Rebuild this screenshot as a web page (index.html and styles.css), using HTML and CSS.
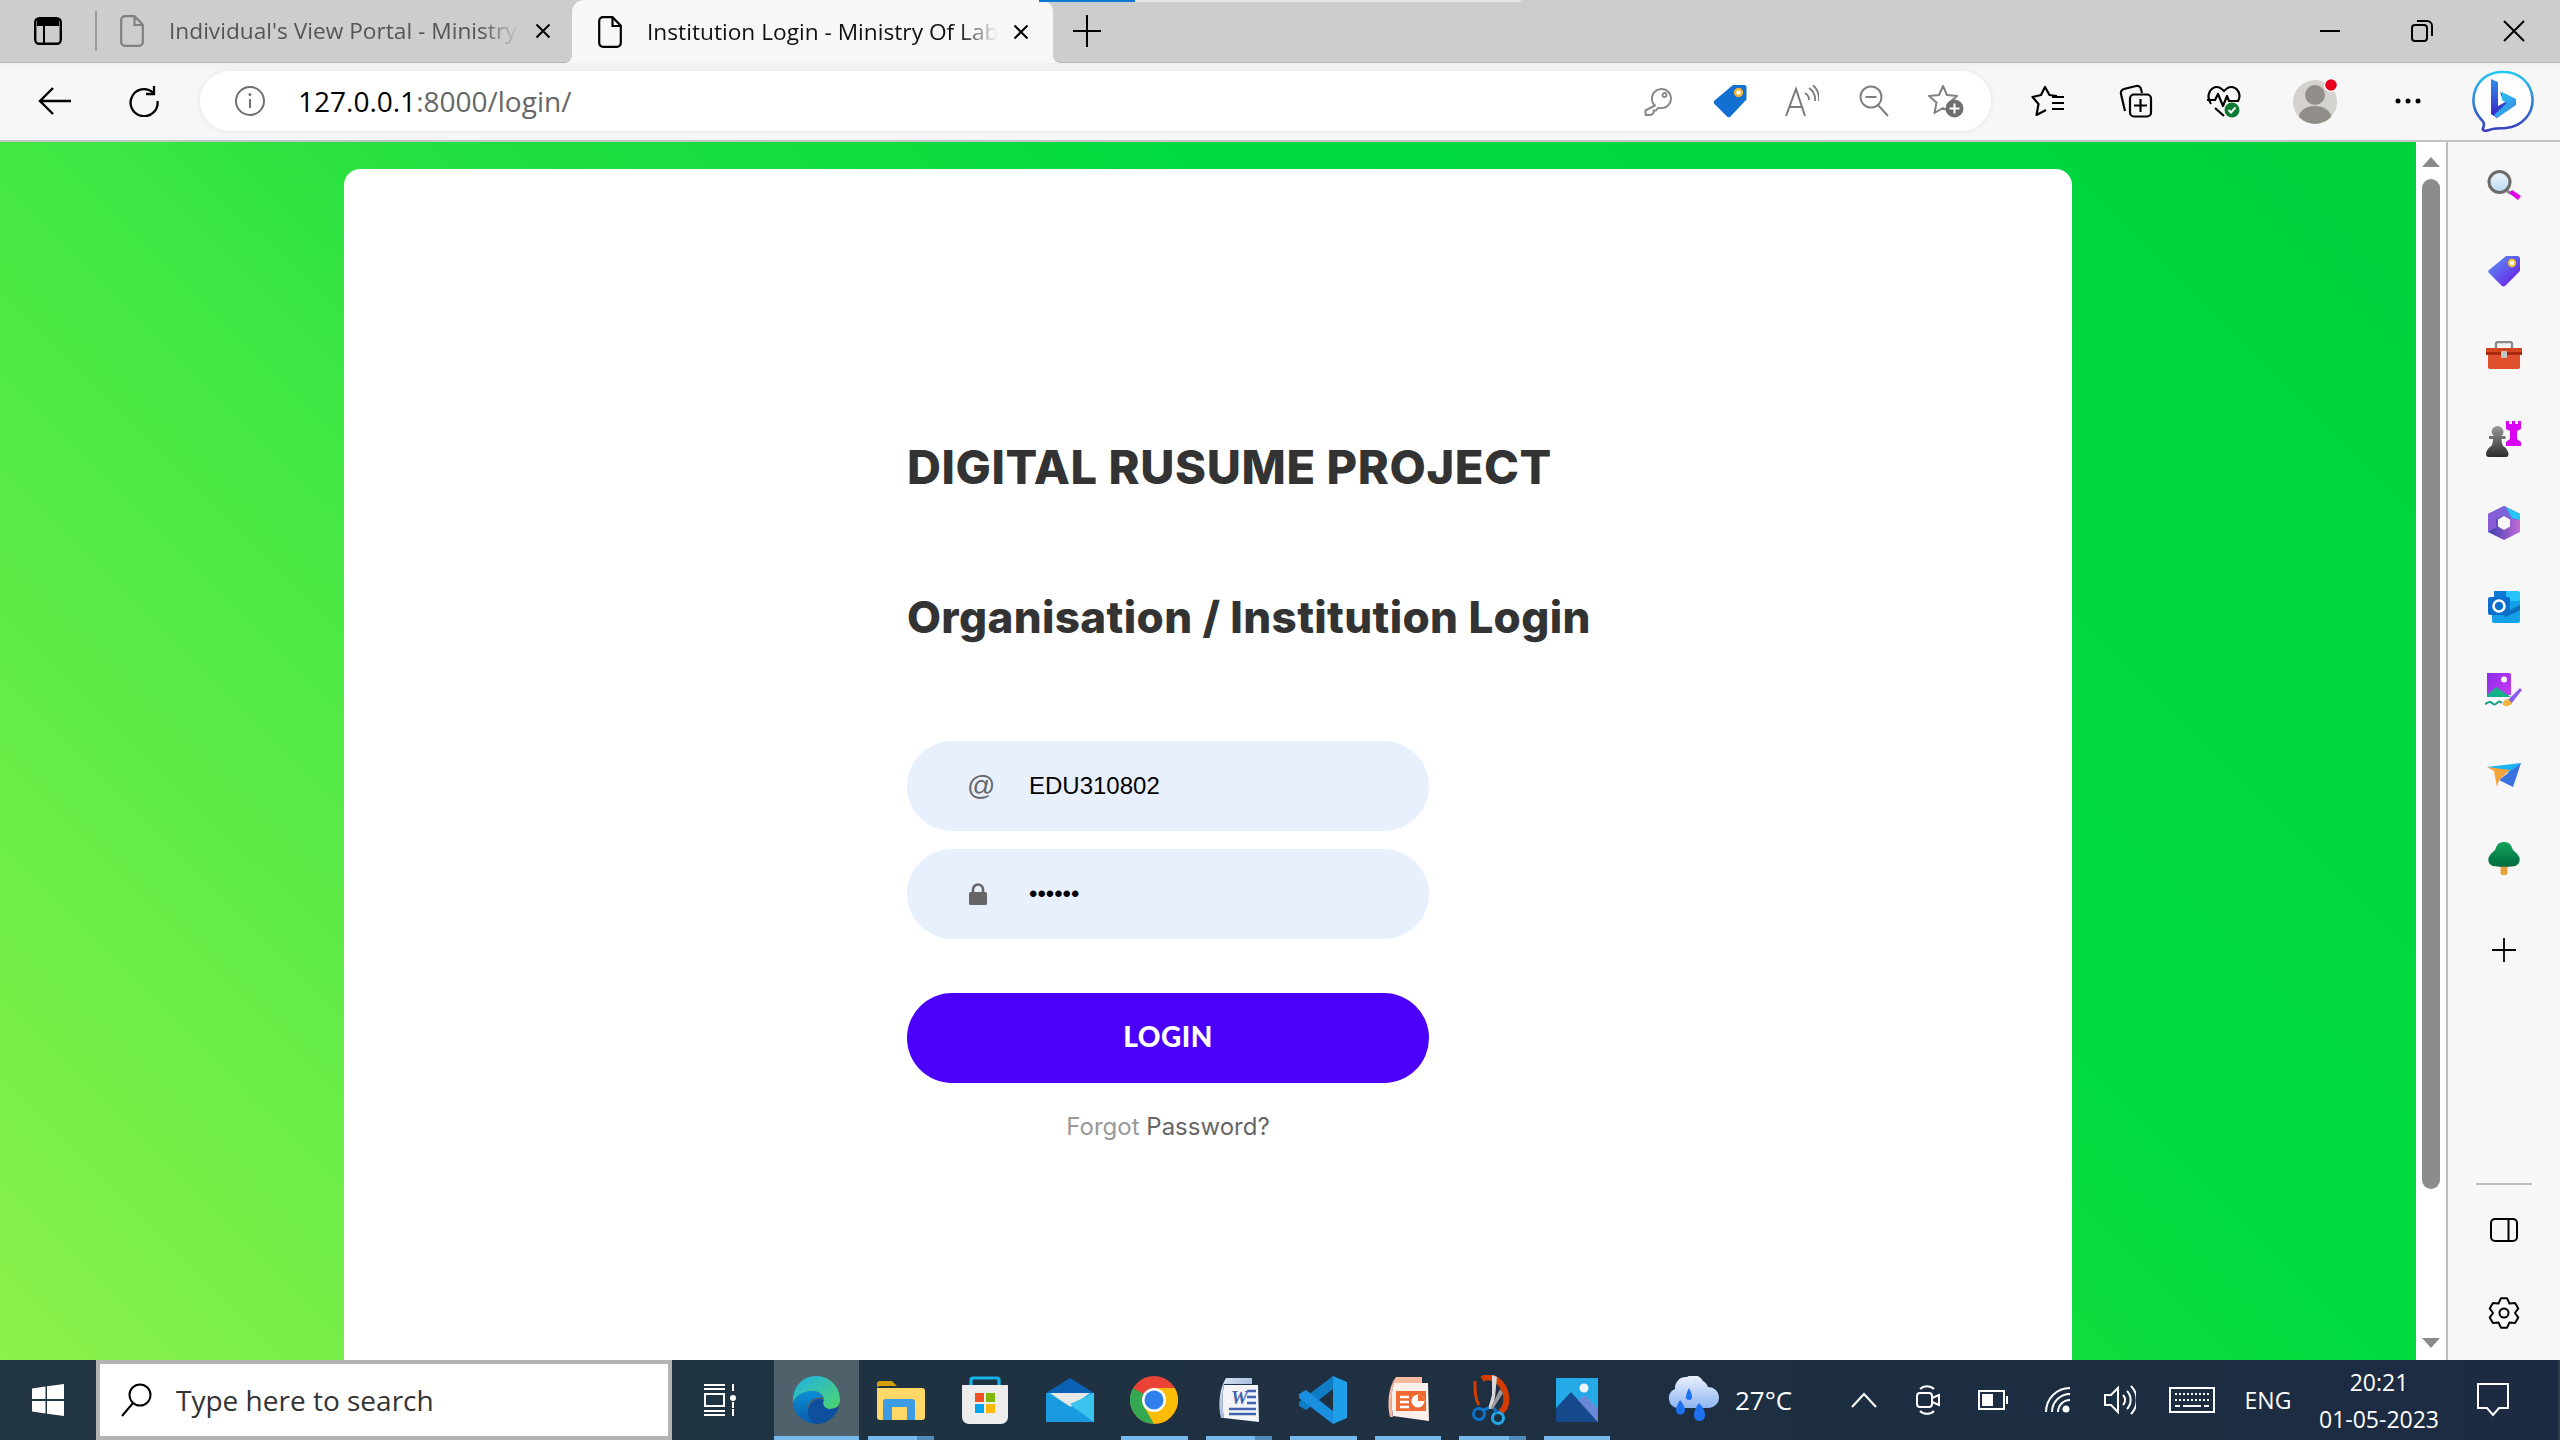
FILE: index.html
```html
<!DOCTYPE html>
<html lang="en">
<head>
<meta charset="utf-8">
<title>Institution Login - Ministry Of Labour</title>
<link rel="stylesheet" href="styles.css">
</head>
<body>
<div class="window">
  <header class="tabstrip">
    <div class="progress"><i class="progress-done"></i></div>
    <div class="strip-left">
      <div class="slot slot-tabs">
        <svg width="28" height="28" viewBox="0 0 28 28"><rect x="1.2" y="1.2" width="25.6" height="25.6" rx="4" fill="none" stroke="#000" stroke-width="2.4"/><path d="M3 2h22v7H3z" fill="#000"/><path d="M10 8v19" stroke="#000" stroke-width="2"/></svg>
      </div>
      <i class="tab-sep"></i>
      <div class="tab tab-inactive">
        <svg class="file" width="24" height="32" viewBox="0 0 24 32"><path d="M5 1.2h9.5l8.3 8.6V27a3.8 3.8 0 0 1-3.8 3.8H5A3.8 3.8 0 0 1 1.200 27V5A3.8 3.8 0 0 1 5 1.200zM14.500 1.500V10h8" fill="none" stroke="#808080" stroke-width="2.200"/></svg>
        <span class="tab-title">Individual's View Portal - Ministry</span>
        <svg class="close" width="16" height="16" viewBox="0 0 16 16"><path d="M1.500 1.500l13 13M14.500 1.500l-13 13" stroke="#000" stroke-width="2"/></svg>
      </div>
    </div>
    <div class="tab tab-active">
      <svg class="file" width="24" height="32" viewBox="0 0 24 32"><path d="M5 1.2h9.5l8.3 8.6V27a3.8 3.8 0 0 1-3.8 3.8H5A3.8 3.8 0 0 1 1.200 27V5A3.8 3.8 0 0 1 5 1.200zM14.500 1.500V10h8" fill="none" stroke="#000" stroke-width="2.200"/></svg>
      <span class="tab-title">Institution Login - Ministry Of Lab</span>
      <svg class="close" width="16" height="16" viewBox="0 0 16 16"><path d="M1.500 1.500l13 13M14.500 1.500l-13 13" stroke="#000" stroke-width="2"/></svg>
    </div>
    <div class="strip-right">
      <div class="slot slot-new">
        <svg width="28" height="32" viewBox="0 0 28 32"><path d="M14 0v32M0 16h28" stroke="#000" stroke-width="2"/></svg>
      </div>
      <div class="win-controls">
        <div class="slot slot-win"><svg width="20" height="4" viewBox="0 0 20 4"><path d="M0 2h20" stroke="#000" stroke-width="2"/></svg></div>
        <div class="slot slot-win"><svg width="22" height="22" viewBox="0 0 22 22"><rect x="1" y="5" width="15" height="16" rx="3" fill="none" stroke="#000" stroke-width="2"/><path d="M6 1h10a5 5 0 0 1 5 5v10" fill="none" stroke="#000" stroke-width="2"/></svg></div>
        <div class="slot slot-win"><svg width="22" height="22" viewBox="0 0 22 22"><path d="M1 1l20 20M21 1L1 21" stroke="#000" stroke-width="2"/></svg></div>
      </div>
    </div>
  </header>

  <nav class="toolbar">
    <div class="slot">
      <svg width="34" height="30" viewBox="0 0 34 30"><path d="M33 15H3M15 2L2 15l13 13" fill="none" stroke="#000" stroke-width="2.400"/></svg>
    </div>
    <div class="slot">
      <svg width="32" height="32" viewBox="0 0 32 32"><path d="M25 7.500A13.500 13.500 0 1 0 29.500 16" fill="none" stroke="#000" stroke-width="2.300"/><path d="M26 1v8h-8" fill="none" stroke="#000" stroke-width="2.300"/></svg>
    </div>
    <div class="address">
      <div class="slot slot-info">
        <svg width="32" height="32" viewBox="0 0 32 32"><circle cx="16" cy="16" r="14" fill="none" stroke="#707070" stroke-width="2"/><path d="M16 14v9" stroke="#707070" stroke-width="2"/><circle cx="16" cy="9.500" r="1.500" fill="#707070"/></svg>
      </div>
      <div class="url"><span class="url-host">127.0.0.1</span>:8000/login/</div>
      <div class="slot slot-addr">
        <svg width="30" height="30" viewBox="0 0 30 30"><path d="M12 19.500a9.500 9.500 0 1 1 6 2.500l-3.200.2-1.800 2.300h-2.500v2.500l-2.500 2H2.500v-4.500z" fill="none" stroke="#8a8a8a" stroke-width="2" stroke-linejoin="round"/><circle cx="21.500" cy="9" r="2" fill="none" stroke="#8a8a8a" stroke-width="1.800"/></svg>
      </div>
      <div class="slot slot-addr">
        <svg width="34" height="34" viewBox="0 0 34 34"><path d="M20 1h11a2.500 2.500 0 0 1 2.500 2.500v12L17.500 32.500a2.500 2.500 0 0 1-3.500 0L1.500 20a2.500 2.500 0 0 1 0-3.500z" fill="#1270d3"/><circle cx="25.500" cy="8.500" r="3.500" fill="#fff" stroke="#f4b52c" stroke-width="2.400"/></svg>
      </div>
      <div class="slot slot-addr">
        <svg width="34" height="32" viewBox="0 0 34 32"><path d="M1 31L11 4l9 27M4.500 22h13" fill="none" stroke="#7a7a7a" stroke-width="2"/><path d="M20 8a8 8 0 0 1 4 7M24 3a14 14 0 0 1 6 13M28 0a20 20 0 0 1 6 16" fill="none" stroke="#7a7a7a" stroke-width="1.800"/></svg>
      </div>
      <div class="slot slot-addr">
        <svg width="30" height="32" viewBox="0 0 30 32"><circle cx="12" cy="12" r="10.500" fill="none" stroke="#808080" stroke-width="2"/><path d="M6.500 12h11M19 20l10 11" fill="none" stroke="#808080" stroke-width="2"/></svg>
      </div>
      <div class="slot slot-addr">
        <svg width="36" height="34" viewBox="0 0 36 34"><path d="M15 2l4 9 10 1-7.500 6.500L23.500 29 15 24 6.500 29l2-10.500L1 12l10-1z" fill="none" stroke="#808080" stroke-width="2" stroke-linejoin="round"/><circle cx="26.500" cy="24.500" r="9" fill="#6e6e6e"/><path d="M26.500 19.500v10M21.500 24.500h10" stroke="#fff" stroke-width="2"/></svg>
      </div>
    </div>
    <div class="slot">
      <svg width="34" height="32" viewBox="0 0 34 32"><path d="M26 11l-7.500-1L14 2l-4 8-8.500 2 6 7L5.500 30l9.500-5" fill="none" stroke="#000" stroke-width="2.200" stroke-linejoin="round"/><path d="M21 12h12M21 18h12M21 24h12" stroke="#000" stroke-width="2.200"/></svg>
    </div>
    <div class="slot">
      <svg width="34" height="34" viewBox="0 0 34 34"><path d="M6 27L2 10a4 4 0 0 1 3-5l12-3a4 4 0 0 1 5 3l1 4" fill="none" stroke="#000" stroke-width="2.200"/><rect x="11" y="10.500" width="21" height="22" rx="4" fill="#f7f7f7" stroke="#000" stroke-width="2.200"/><path d="M21.500 15v13M15 21.500h13" stroke="#000" stroke-width="2.200"/></svg>
    </div>
    <div class="slot">
      <svg width="34" height="34" viewBox="0 0 34 34"><path d="M4 20C-2 11 4 3 10 3c3 0 5 2 7 4 2-2 4-4 7-4 6 0 11 7 7 14M8 24l9 8" fill="none" stroke="#000" stroke-width="2.200"/><path d="M0 16h8l3-6 5 12 4-10 2 5h10" fill="none" stroke="#000" stroke-width="2.200" stroke-linejoin="round"/><circle cx="25" cy="26" r="7.500" fill="#0d7a34"/><path d="M21.500 26l2.500 2.500 4.500-5" fill="none" stroke="#fff" stroke-width="2"/></svg>
    </div>
    <div class="slot">
      <svg width="46" height="50" viewBox="0 0 46 50"><circle cx="22" cy="26" r="22" fill="#d3d2ce"/><circle cx="22" cy="19" r="10" fill="#918d88"/><path d="M6 41a16 11 0 0 1 32 0 22 22 0 0 1-32 0z" fill="#918d88"/><circle cx="38" cy="9" r="7" fill="#fff"/><circle cx="38" cy="9" r="5.800" fill="#e8001c"/></svg>
    </div>
    <div class="slot">
      <svg width="26" height="6" viewBox="0 0 26 6"><circle cx="3" cy="3" r="2.500" fill="#000"/><circle cx="13" cy="3" r="2.500" fill="#000"/><circle cx="23" cy="3" r="2.500" fill="#000"/></svg>
    </div>
    <div class="slot">
      <svg width="62" height="62" viewBox="0 0 62 62"><defs><linearGradient id="bub" x1="0" y1="0" x2="0" y2="1"><stop offset="0" stop-color="#25c8f2"/><stop offset="1" stop-color="#3b3fc0"/></linearGradient><linearGradient id="bb" x1="0" y1="0" x2="0" y2="1"><stop offset="0" stop-color="#2f8fe8"/><stop offset="1" stop-color="#3a1fc4"/></linearGradient><linearGradient id="bc" x1="0" y1="0" x2="1" y2="1"><stop offset="0" stop-color="#1fd0f0"/><stop offset="1" stop-color="#3f80e8"/></linearGradient></defs><path d="M31 2a28 28 0 0 1 3 56c-6 .5-12 0-17 2-4 1.500-7 .5-6-2 2-4 1-6-3-10A28 28 0 0 1 31 2z" fill="#fff" stroke="url(#bub)" stroke-width="2.600"/><path d="M19 9l7 3v24l9-5-5-3-2-6 14 7v5L25 48l-6-4z" fill="url(#bb)"/><path d="M30 22l14 7v6L25 48l-3-3 13-12-5-3z" fill="url(#bc)"/></svg>
    </div>
  </nav>

  <div class="middle">
    <main class="page">
      <section class="card">
        <h1 class="brand">DIGITAL RUSUME PROJECT</h1>
        <h2 class="subtitle">Organisation / Institution Login</h2>
        <div class="field">
          <span class="field-icon field-at">@</span>
          <span class="field-value">EDU310802</span>
        </div>
        <div class="field field-second">
          <span class="field-icon field-lock">
            <svg width="18" height="22" viewBox="0 0 18 22"><path d="M4 10V6.500a5 5 0 0 1 10 0V10" fill="none" stroke="#666" stroke-width="2.600"/><rect x="0" y="9" width="18" height="13" rx="1.500" fill="#666"/></svg>
          </span>
          <span class="field-value">••••••</span>
        </div>
        <button class="login" type="button">LOGIN</button>
        <p class="forgot"><span class="forgot-a">Forgot</span> <span class="forgot-b">Password?</span></p>
      </section>
    </main>
    <div class="scrollbar">
      <svg class="arrow" width="18" height="10" viewBox="0 0 18 10"><path d="M9 0l9 10H0z" fill="#8a8a8a"/></svg>
      <div class="thumb"></div>
      <svg class="arrow arrow-down" width="18" height="10" viewBox="0 0 18 10"><path d="M0 0h18L9 10z" fill="#8a8a8a"/></svg>
    </div>
    <aside class="sidebar">
      <div class="side-top">
        <div class="side-item"><svg width="34" height="34" viewBox="0 0 34 34"><defs><linearGradient id="sg" x1="0" y1="0" x2="0" y2="1"><stop offset="0" stop-color="#eef6fc"/><stop offset="1" stop-color="#b9d9f2"/></linearGradient></defs><path d="M20 21l5 3" stroke="#888" stroke-width="3"/><path d="M22 23l3-3 9 6-3 4z" fill="#e100e8"/><circle cx="12.500" cy="12" r="10.500" fill="url(#sg)" stroke="#6c6c6c" stroke-width="3"/></svg></div>
        <div class="side-item"><svg width="32" height="32" viewBox="0 0 32 32"><defs><linearGradient id="tg" x1="0" y1="0" x2="1" y2="1"><stop offset="0" stop-color="#5b9cf5"/><stop offset="1" stop-color="#6a10e8"/></linearGradient></defs><path d="M18 1h11a3 3 0 0 1 3 3v11a3 3 0 0 1-1 2L17 31a3 3 0 0 1-3 0L1 18a2 2 0 0 1 0-3z" fill="url(#tg)"/><circle cx="24" cy="8" r="3.200" fill="#fff" stroke="#f2c12e" stroke-width="2"/></svg></div>
        <div class="side-item"><svg width="36" height="28" viewBox="0 0 36 28"><path d="M10 7V3a2 2 0 0 1 2-2h12a2 2 0 0 1 2 2v4" fill="none" stroke="#8a8a8a" stroke-width="2.400"/><path d="M0 7h36v4a2 2 0 0 1-2 2H2a2 2 0 0 1-2-2z" fill="#d4481f"/><path d="M2 13h32v13a2 2 0 0 1-2 2H4a2 2 0 0 1-2-2z" fill="#e0502c"/><path d="M0 11h36v3H0z" fill="#a82a10"/><rect x="15" y="10" width="6" height="7" rx="1" fill="#c4c4c4"/></svg></div>
        <div class="side-item"><svg width="36" height="36" viewBox="0 0 36 36"><defs><linearGradient id="pawn" x1="0" y1="0" x2="0" y2="1"><stop offset="0" stop-color="#9a9a9a"/><stop offset="1" stop-color="#2c2c2c"/></linearGradient></defs><path d="M20 0h3v3h3V0h3v3h3V0h3v8l-4 2v8l4 3v4H20v-4l4-3v-8l-4-2z" fill="#d900f5"/><path d="M11.500 5a6 6 0 0 1 6 6 5 5 0 0 1-2 4h4v3h-4c0 4 1 7 3 8 2 1 4 5 4 7 0 2-1 3-2 3H3c-2 0-3-1-3-3 0-2 2-6 4-7 2-1 3-4 3-8H3v-3h5a5 5 0 0 1-2.500-4 6 6 0 0 1 6-6z" fill="url(#pawn)"/></svg></div>
        <div class="side-item"><svg width="32" height="34" viewBox="0 0 32 34"><defs><linearGradient id="o1" x1="0" y1="0" x2="1" y2="0"><stop offset="0" stop-color="#8c5ad8"/><stop offset="1" stop-color="#6a70e0"/></linearGradient><linearGradient id="o2" x1="0" y1="0" x2="1" y2="0"><stop offset="0" stop-color="#3a3fb0"/><stop offset="1" stop-color="#c46ad8"/></linearGradient></defs><path d="M16 0l16 8v18l-16 8-16-8V8z" fill="url(#o2)"/><path d="M16 0l16 8v6l-8-1-8-4-8 4v8l-8 5V8z" fill="url(#o1)"/><path d="M18 1l14 7v6l-8-2z" fill="#27c5f5"/><path d="M16 10l6 3.500v7L16 24l-6-3.500v-7z" fill="#f7f7f7"/></svg></div>
        <div class="side-item"><svg width="32" height="32" viewBox="0 0 32 32"><path d="M6 0h22a2 2 0 0 1 2 2v8H6z" fill="#0f78d4"/><path d="M18 0h12a2 2 0 0 1 2 2v12H18z" fill="#28c2fb"/><path d="M4 10h28v20a2 2 0 0 1-2 2H6a2 2 0 0 1-2-2z" fill="#14a0e8"/><path d="M14 23l18-9v5l-14 7z" fill="#0b6fc0"/><rect x="0" y="6" width="22" height="18" rx="2" fill="#0a6fcc"/><circle cx="11" cy="15" r="5.500" fill="none" stroke="#fff" stroke-width="2.600"/></svg></div>
        <div class="side-item"><svg width="38" height="36" viewBox="0 0 38 36"><defs><linearGradient id="pt" x1="0" y1="0" x2="1" y2="1"><stop offset="0" stop-color="#8a2cf0"/><stop offset="1" stop-color="#c93cf0"/></linearGradient></defs><path d="M2 0h22a2 2 0 0 1 2 2v20H2z" fill="url(#pt)"/><circle cx="19" cy="6.500" r="3" fill="#fff"/><path d="M2 22l9-8 9 6 6 4H2z" fill="#18b08a"/><path d="M22 28L35 15l2 2-11 14z" fill="#8a5af0"/><path d="M18 32a5 5 0 0 1 5-6l4 4a6 6 0 0 1-9 2z" fill="#f2b640"/><path d="M0 31c4-2 5-3 7-1s3 2 5 0 3-2 5 0" fill="none" stroke="#16a085" stroke-width="2"/></svg></div>
        <div class="side-item"><svg width="34" height="26" viewBox="0 0 34 26"><path d="M0 5l34-4-11 10z" fill="#1cb4f0"/><path d="M34 1L26 25 12 18z" fill="#3a72e0"/><path d="M0 5l23 3-11 10-2 7-3-16z" fill="#f2a33a"/></svg></div>
        <div class="side-item"><svg width="32" height="34" viewBox="0 0 32 34"><defs><linearGradient id="tr" x1="0" y1="0" x2="0" y2="1"><stop offset="0" stop-color="#12a45c"/><stop offset="1" stop-color="#036b3e"/></linearGradient></defs><path d="M12.500 24h7v7a2 2 0 0 1-2 2h-3a2 2 0 0 1-2-2z" fill="#e8a33a"/><path d="M16 0c4 0 7 2 8 6 1 3 4 4 6 7 3 4 2 9-3 11-3 1-19 1-22 0-5-2-6-7-3-11 2-3 5-4 6-7 1-4 4-6 8-6z" fill="url(#tr)"/></svg></div>
        <div class="side-item"><svg width="24" height="24" viewBox="0 0 24 24"><path d="M12 0v24M0 12h24" stroke="#000" stroke-width="1.800"/></svg></div>
      </div>
      <div class="side-bottom">
        <i class="side-rule"></i>
        <svg class="side-panel" width="28" height="24" viewBox="0 0 28 24"><rect x="1" y="1" width="26" height="22" rx="4" fill="none" stroke="#000" stroke-width="2"/><path d="M18.500 1v22" stroke="#000" stroke-width="2"/></svg>
        <svg class="side-gear" width="32" height="32" viewBox="0 0 32 32"><path d="M12.900 1.300H19.100L21.500 6.500L27.100 6L30.300 11.400L27 16L30.300 20.600L27.100 26L21.500 25.500L19.100 30.700H12.900L10.500 25.500L4.900 26L1.700 20.600L5 16L1.700 11.400L4.900 6L10.500 6.500Z" fill="none" stroke="#000" stroke-width="2" stroke-linejoin="round"/><circle cx="16" cy="16" r="4.500" fill="none" stroke="#000" stroke-width="2"/></svg>
      </div>
    </aside>
  </div>

  <footer class="taskbar">
    <div class="slot slot-start">
      <svg width="32" height="32" viewBox="0 0 32 32"><path d="M0 4.500l13.500-2v12.500H0zM15 2.300L32 0v15H15zM0 17h13.500v12.500L0 27.500zM15 17h17v15l-17-2.300z" fill="#fff"/></svg>
    </div>
    <div class="search">
      <svg width="32" height="34" viewBox="0 0 32 34"><circle cx="20" cy="12" r="10.500" fill="none" stroke="#000" stroke-width="2"/><path d="M13 20L2 33" stroke="#000" stroke-width="2"/></svg>
      <span class="search-text">Type here to search</span>
    </div>
    <div class="slot slot-view">
      <svg width="32" height="32" viewBox="0 0 32 32"><path d="M0 1h21M0 31h21M0 5h21M0 27h21" stroke="#fff" stroke-width="2"/><path d="M1 10h19v12H1z" fill="none" stroke="#fff" stroke-width="2"/><path d="M29 0v7M29 25v7" stroke="#fff" stroke-width="2"/><circle cx="29" cy="14" r="3" fill="#fff"/><path d="M29 18v6" stroke="#fff" stroke-width="2"/></svg>
    </div>
    <div class="apps">
      <div class="app app-active">
        <svg width="48" height="48" viewBox="0 0 48 48"><defs><linearGradient id="e1" x1="0" y1="0" x2="1" y2="1"><stop offset="0" stop-color="#1fb0e8"/><stop offset="1" stop-color="#4fd66a"/></linearGradient><linearGradient id="e2" x1="0" y1="0" x2="0" y2="1"><stop offset="0" stop-color="#0c8fd8"/><stop offset="1" stop-color="#0b5aa8"/></linearGradient></defs><path d="M24 0c13 0 24 10 24 24 0 5-4 9-10 9-4 0-7-2-7-5 0-1 1-2 1-4 0-5-5-9-11-9C11 15 2 21 1 27 0 12 10 0 24 0z" fill="url(#e1)"/><path d="M1 27c1-6 10-12 20-12 5 0 9 3 10 7-2-1-4-1-7 0-6 2-10 8-8 15 1 4 4 8 9 11C11 47 1 38 1 27z" fill="url(#e2)"/><path d="M25 48c-6-3-10-8-9-14 1-6 6-11 11-11 2 0 3 0 4 1-1 4 2 9 7 9 3 0 6-1 9-3-3 11-12 18-22 18z" fill="#0e4f9e"/></svg>
      </div>
      <div class="app app-open app-multi">
        <svg width="48" height="40" viewBox="0 0 48 40"><path d="M0 4a3 3 0 0 1 3-3h12l5 5H3a3 3 0 0 0-3 3z" fill="#d69e0c"/><path d="M0 8h45a3 3 0 0 1 3 3v26a3 3 0 0 1-3 3H3a3 3 0 0 1-3-3z" fill="#ffd868"/><path d="M6 38V22a3 3 0 0 1 3-3h26a3 3 0 0 1 3 3v18h-8V27H15v13H6z" fill="#3b9ce4"/></svg>
      </div>
      <div class="app">
        <svg width="46" height="48" viewBox="0 0 46 48"><path d="M9 14V4a2 2 0 0 1 2-2h24a2 2 0 0 1 2 2v10" fill="none" stroke="#19b2e6" stroke-width="3.200"/><path d="M0 9h46v32a7 7 0 0 1-7 7H7a7 7 0 0 1-7-7z" fill="#ededed"/><rect x="13" y="17" width="9" height="9" fill="#f25022"/><rect x="24" y="17" width="9" height="9" fill="#7fba00"/><rect x="13" y="28" width="9" height="9" fill="#00a4ef"/><rect x="24" y="28" width="9" height="9" fill="#ffb900"/></svg>
      </div>
      <div class="app">
        <svg width="48" height="44" viewBox="0 0 48 44"><path d="M0 15L24 0l24 15z" fill="#0b62b4"/><path d="M0 15h48v29H0z" fill="#1ea7e8"/><path d="M4 15h40L24 29z" fill="#e8e8e8"/><path d="M48 15v29L24 26z" fill="#3cc4f0"/><path d="M0 15v29h48L20 26z" fill="#1a9be0"/></svg>
      </div>
      <div class="app app-open">
        <svg width="48" height="48" viewBox="0 0 48 48"><circle cx="24" cy="24" r="24" fill="#ea4335"/><path d="M24 24L3.200 12A24 24 0 0 0 24 48l10.400-18z" fill="#34a853"/><path d="M24 24l-10.400 6L24 48a24 24 0 0 0 20.800-36H24z" fill="#fbbc05"/><circle cx="24" cy="24" r="12" fill="#fff"/><circle cx="24" cy="24" r="9.500" fill="#2f7fee"/></svg>
      </div>
      <div class="app app-open app-multi">
        <svg width="42" height="46" viewBox="0 0 42 46"><defs><linearGradient id="wd" x1="0" y1="0" x2="1" y2="1"><stop offset="0" stop-color="#dfe8f6"/><stop offset="1" stop-color="#7d98cc"/></linearGradient></defs><path d="M8 1h26v6H6c-2 9-2 25 0 34h-3C0 30 1 12 8 1z" fill="url(#wd)"/><path d="M6 8h34l1 37-35-4c-2-9-2-24 0-33z" fill="#f2f4f8"/><text class="word-w" x="13" y="27">W</text><path d="M29 14h9M29 20h9M29 26h9M11 32h27M11 37h27" stroke="#3f63ac" stroke-width="2.600"/></svg>
      </div>
      <div class="app app-open">
        <svg width="48" height="48" viewBox="0 0 48 48"><path d="M34 0v13L7 34l-7-4v-4z" fill="#0f7cc6"/><path d="M34 48V35L7 14l-7 4v4z" fill="#1a8fe0"/><path d="M34 0l14 6v36l-14 6z" fill="#1f9fe8"/></svg>
      </div>
      <div class="app app-open">
        <svg width="42" height="46" viewBox="0 0 42 46"><path d="M9 0h26v6H7c-3 9-3 25-1 34H3C0 28 1 10 9 0z" fill="#f7b9a0"/><path d="M7 6h34l1 38-36-5c-2-10-2-24 1-33z" fill="#fdf0ea"/><path d="M9 14h30v20H9z" fill="#ee6a30"/><path d="M13 20h9M13 25h9M13 30h9" stroke="#fff" stroke-width="2.400"/><circle cx="31" cy="24" r="6.500" fill="#fff"/><path d="M31 24v-6.500a6.500 6.500 0 0 1 6.500 6.500z" fill="#ee6a30"/></svg>
      </div>
      <div class="app app-open app-multi">
        <svg width="40" height="50" viewBox="0 0 40 50"><path d="M10 4c10-6 22 4 24 16 1 8 0 14-6 17" fill="none" stroke="#d53c00" stroke-width="6"/><path d="M3 6c0 10 0 18 4 24" fill="none" stroke="#d53c00" stroke-width="3"/><path d="M20 0v20l-4 14h4l3-12 2-20z" fill="#d8d8d8"/><path d="M28 14L18 34h3l10-16z" fill="#9a9a9a"/><circle cx="7" cy="39" r="5.500" fill="none" stroke="#0d74c8" stroke-width="3"/><circle cx="26" cy="43" r="5.500" fill="none" stroke="#28a8e8" stroke-width="3"/><path d="M11 35l6-2M25 38l-3-5" stroke="#0d74c8" stroke-width="3"/></svg>
      </div>
      <div class="app app-open">
        <svg width="42" height="44" viewBox="0 0 42 44"><path d="M0 0h42v44H0z" fill="#25aae8"/><circle cx="28" cy="10" r="4.500" fill="#f0f4fa"/><path d="M0 30L15 14l27 30H0z" fill="#174a8c"/><path d="M22 22l7-5 13 14v13z" fill="#6a88d8"/></svg>
      </div>
    </div>
    <div class="tray">
      <div class="slot">
        <svg width="52" height="48" viewBox="0 0 52 48"><defs><linearGradient id="cl" x1="0" y1="0" x2="0" y2="1"><stop offset="0" stop-color="#eef2fc"/><stop offset="1" stop-color="#8eb6f2"/></linearGradient></defs><path d="M10 32a10 10 0 0 1-2-19 11 11 0 0 1 12-12 11 11 0 0 1 16 4c2 1 4 3 5 6a10 10 0 0 1 1 21z" fill="url(#cl)"/><path d="M22 12c-2 4-3 7-3 9a3 3 0 0 0 6 0c0-2-1-5-3-9zM13 24c-2 4-4 7-4 10 0 6 9 6 9 0 0-3-2-6-5-10zM32 27c-3 4-5 8-5 12 0 8 11 8 11 0 0-4-2-8-6-12z" fill="#1f70f0"/></svg>
      </div>
      <div class="tray-text tray-temp">27°C</div>
      <div class="slot"><svg width="26" height="16" viewBox="0 0 26 16"><path d="M1 15L13 2l12 13" fill="none" stroke="#fff" stroke-width="2"/></svg></div>
      <div class="slot"><svg width="24" height="32" viewBox="0 0 24 32"><path d="M4 5a10 10 0 0 1 14 0M4 27a10 10 0 0 0 14 0" fill="none" stroke="#fff" stroke-width="2"/><rect x="1" y="9" width="15" height="14" rx="3" fill="none" stroke="#fff" stroke-width="2"/><path d="M16 14l7-3v10l-7-3" fill="none" stroke="#fff" stroke-width="2"/></svg></div>
      <div class="slot"><svg width="30" height="20" viewBox="0 0 30 20"><rect x="1" y="1" width="25" height="18" fill="none" stroke="#fff" stroke-width="2"/><rect x="4" y="4" width="11" height="12" fill="#fff"/><path d="M29 6v8" stroke="#fff" stroke-width="2"/></svg></div>
      <div class="slot"><svg width="26" height="26" viewBox="0 0 26 26"><path d="M1 25A24 24 0 0 1 25 1M7 25A18 18 0 0 1 25 7M13 25a12 12 0 0 1 12-12" fill="none" stroke="#fff" stroke-width="2"/><circle cx="21" cy="22" r="3.500" fill="#fff"/></svg></div>
      <div class="slot"><svg width="32" height="30" viewBox="0 0 32 30"><path d="M1 10h6l7-7v24l-7-7H1z" fill="none" stroke="#fff" stroke-width="2"/><path d="M19 10a7 7 0 0 1 0 10M23 6a13 13 0 0 1 0 18M27 1a20 20 0 0 1 0 28" fill="none" stroke="#fff" stroke-width="2"/></svg></div>
      <div class="slot"><svg width="46" height="26" viewBox="0 0 46 26"><rect x="1" y="1" width="44" height="24" fill="none" stroke="#fff" stroke-width="2"/><path d="M6 7h34M6 13h34" stroke="#fff" stroke-width="2" stroke-dasharray="2 2"/><path d="M6 19h5M14 19h18M35 19h5" stroke="#fff" stroke-width="2"/></svg></div>
      <div class="tray-text tray-lang">ENG</div>
      <div class="clock"><span>20:21</span><span>01-05-2023</span></div>
      <div class="slot"><svg width="32" height="34" viewBox="0 0 32 34"><path d="M1 1h30v24H22l-6 7-6-7H1z" fill="none" stroke="#fff" stroke-width="2"/></svg></div>
    </div>
  </footer>
</div>
</body>
</html>
```
FILE: styles.css
```css
* { box-sizing: border-box; }
html, body { margin: 0; height: 100%; overflow: hidden; }
body { font-family: "Open Sans", "Noto Sans", sans-serif; background: #fff; }
svg { display: block; flex: none; }

.window { display: flex; flex-direction: column; width: 2560px; height: 1440px; }
.slot { display: flex; align-items: center; justify-content: center; }

/* Tab strip */
.tabstrip { position: relative; display: flex; flex: none; height: 63px; background: linear-gradient(to bottom, #cdcdcd 50%, #f7f7f7 50%); }
.progress { position: absolute; left: 1039px; top: 0; width: 482px; height: 2px; background: #e4e4e4; z-index: 2; }
.progress-done { display: block; width: 96px; height: 2px; background: #0a78d4; }
.strip-left { display: flex; align-items: center; flex: none; width: 572px; background: #cdcdcd; border-bottom: 1px solid #b4b4b4; border-bottom-right-radius: 8px; }
.strip-right { display: flex; align-items: center; flex: 1; background: #cdcdcd; border-bottom: 1px solid #b4b4b4; border-bottom-left-radius: 8px; }
.slot-tabs { width: 95px; height: 100%; }
.tab-sep { width: 2px; height: 40px; background: #9a9a9a; flex: none; }
.tab { display: flex; align-items: center; height: 100%; flex: none; }
.tab-inactive { width: 475px; padding-left: 23px; color: #555; }
.tab-active { width: 481px; padding-left: 26px; background: #f7f7f7; color: #111; border-radius: 12px 12px 0 0; }
.tab .file { margin-right: 25px; }
.tab-title { display: block; width: 354px; font-size: 22.700px; line-height: 32px; white-space: nowrap; mask-image: linear-gradient(to right, #000 88%, transparent 99%); }
.tab .close { margin-left: 12px; }
.slot-new { width: 67px; height: 100%; }
.win-controls { display: flex; margin-left: auto; height: 100%; }
.slot-win { width: 92px; }

/* Toolbar */
.toolbar { display: grid; grid-template-columns: 110px 68px 1826px 88px 88px 88px 96px 88px 102px; align-items: center; flex: none; height: 79px; padding-bottom: 1px; background: linear-gradient(to bottom, #f0f0f0, #f7f7f7 8px); border-bottom: 2px solid #c4c4c4; }
.address { display: flex; align-items: center; height: 60px; margin: 0 13px 0 22px; padding-right: 9px; background: #fff; border-radius: 30px; box-shadow: 0 0 6px rgba(0, 0, 0, .08); }
.slot-info { flex: none; width: 98px; padding-left: 2px; }
.url { flex: 1; font-size: 28px; color: #666; white-space: nowrap; }
.url-host { color: #000; }
.slot-addr { flex: none; width: 72px; }

/* Middle */
.middle { display: flex; flex: 1; min-height: 0; }
.page { flex: 1; min-width: 0; overflow: hidden; background: linear-gradient(45deg, #8cf14a 0, #44e844 860px, #25e040 1140px, #00da3f 1700px, #00d23c 2570px); }
.card { width: 1728px; height: 1400px; margin: 27px auto 0; padding: 0 0 0 563px; background: #fff; border-radius: 16px 16px 0 0; }
.brand { margin: 0; padding-top: 268px; font: 800 47px/60px "Inter", sans-serif; letter-spacing: .6px; color: #333; white-space: nowrap; }
.subtitle { margin: 90px 0 0; font: 800 44px/60px "Inter", sans-serif; letter-spacing: .35px; color: #333; white-space: nowrap; }
.field { display: flex; align-items: center; width: 522px; height: 90px; margin-top: 94px; padding-left: 60px; background: #e8f0fe; border-radius: 45px; }
.field-second { margin-top: 18px; }
.field-icon { width: 62px; color: #666; }
.field-at { font: 28px/1 "Liberation Sans", sans-serif; }
.field-lock { padding-left: 2px; }
.field-value { font: 24px/1 "Liberation Sans", sans-serif; color: #000; }
.login { display: block; width: 522px; height: 90px; margin-top: 54px; padding: 0 0 4px; border: 0; border-radius: 45px; background: #4b00fa; color: #fff; font: 900 28px/1 "Lato", sans-serif; letter-spacing: .5px; }
.forgot { width: 522px; margin: 28px 0 0; text-align: center; font: 400 24px/32px "Inter", sans-serif; }
.forgot-a { color: #999; }
.forgot-b { color: #666; }

/* Scrollbar */
.scrollbar { display: flex; flex-direction: column; align-items: center; flex: none; width: 32px; padding: 15px 0 12px; background: #fff; border-right: 2px solid #bfbfbf; }
.thumb { width: 18px; height: 1010px; margin-top: 12px; background: #8c8c8c; border-radius: 9px; }
.arrow-down { margin-top: auto; }

/* Sidebar */
.sidebar { display: flex; flex-direction: column; justify-content: space-between; flex: none; width: 112px; background: #f7f7f7; }
.side-top { display: flex; flex-direction: column; padding-top: 3px; }
.side-item { display: flex; align-items: center; justify-content: center; height: 84px; }
.side-item:last-child { margin-top: 7px; }
.side-bottom { display: flex; flex-direction: column; align-items: center; padding-bottom: 31px; }
.side-rule { width: 56px; height: 2px; background: #bdbdbd; }
.side-panel { margin-top: 33px; }
.side-gear { margin-top: 55px; }

/* Taskbar */
.taskbar { display: flex; flex: none; height: 80px; background: linear-gradient(to right, #213641, #1c2b42); border-right: 2px solid #2c3d4e; }
.slot-start { width: 96px; }
.search { display: flex; align-items: center; flex: none; width: 576px; padding-left: 20px; background: #fff; border: 4px solid #b3b3b3; }
.search-text { margin-left: 24px; font-size: 28px; color: #333; white-space: nowrap; }
.slot-view { width: 102px; padding-right: 6px; }
.apps { display: flex; flex: none; }
.app { position: relative; display: flex; align-items: center; justify-content: center; width: 84.500px; }
.app-active { background: #4f626b; }
.app-open::after, .app-active::after { content: ""; position: absolute; left: 9px; right: 9px; bottom: 0; height: 4px; background: #76b9ed; }
.app-active::after { left: 0; right: 0; }
.app-multi::before { content: ""; position: absolute; right: 9px; bottom: 0; width: 17px; height: 4px; background: #4f8db8; z-index: 1; }
.word-w { font: italic 700 19px "Liberation Serif", serif; fill: #3f63ac; }
.tray { display: grid; grid-template-columns: 64px 105px 68px 60px 70px 60px 64px 80px 72px 150px 78px; margin-left: 42px; color: #fff; }
.tray-text { display: flex; align-items: center; font-size: 26px; }
.tray-temp { padding-left: 10px; }
.tray-lang { justify-content: center; font-size: 23px; }
.clock { display: flex; flex-direction: column; align-items: center; justify-content: center; gap: 11px; font-size: 23px; line-height: 26px; }
```
